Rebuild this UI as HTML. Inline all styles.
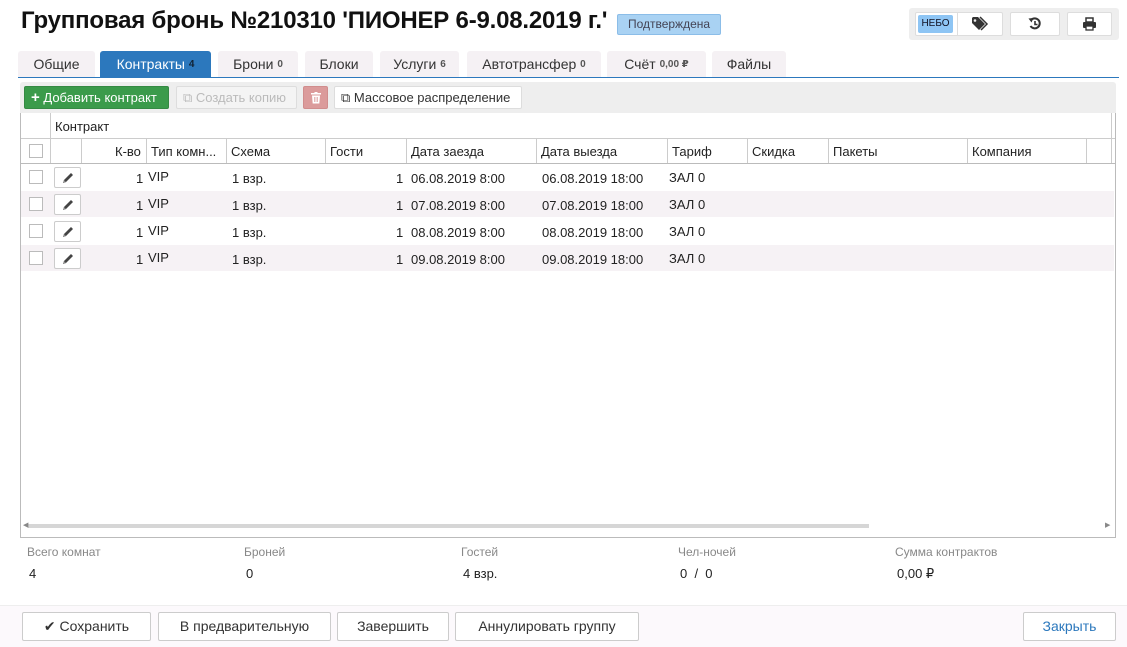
<!DOCTYPE html><html><head><meta charset="utf-8"><style>
*{box-sizing:border-box}body{margin:0;width:1127px;height:647px;background:#fff;font-family:"Liberation Sans","DejaVu Sans",sans-serif;font-size:13px;color:#222;position:relative;overflow:hidden}
.a{position:absolute;white-space:nowrap}
.tab{position:absolute;top:51px;height:26px;background:#f5f1f4;border-radius:3px 3px 0 0;text-align:center;line-height:26px;font-size:14px;color:#333}
.tab sup{font-size:10px;color:#555;font-weight:bold;vertical-align:2px}
.btn{position:absolute;top:86px;height:23px;border:1px solid #ddd;background:#fff;border-radius:2px;line-height:21px;font-size:13px;padding-left:6px;color:#333}
.vl{position:absolute;width:1px;background:#ccc}
.row{position:absolute;left:21px;width:1093px;height:26px}
.cb{position:absolute;width:14px;height:14px;border:1px solid #bbb;background:#fff}
.ed{position:absolute;left:54px;width:27px;height:21px;border:1px solid #ccc;border-radius:2px;background:#fff}
.fb{position:absolute;top:612px;height:29px;border:1px solid #ccc;border-radius:2px;background:#fff;text-align:center;line-height:27px;font-size:14px;color:#333}
.lbl{position:absolute;top:545px;font-size:12px;color:#888}
.val{position:absolute;top:566px;font-size:13px;color:#222}
</style></head><body>
<svg width="0" height="0" style="position:absolute"><defs><g id="pen"><path d="M2 12l1-3 7-7 2 2-7 7z" fill="#444"/><path d="M2 12l1-3 2 2z" fill="#888"/></g></defs></svg>
<div class="a" style="left:21px;top:7px;font-size:24px;font-weight:bold;color:#111;letter-spacing:-0.2px">Групповая бронь №210310 'ПИОНЕР 6-9.08.2019 г.'</div>
<div class="a" style="left:617px;top:14px;width:104px;height:21px;background:#a9d2f3;border:1px solid #8bbde8;border-radius:2px;font-size:12px;color:#445;line-height:19px;text-align:center">Подтверждена</div>
<div class="a" style="left:909px;top:8px;width:210px;height:32px;background:#eee;border-radius:3px"></div>
<div class="a" style="left:915px;top:12px;width:88px;height:24px;background:#fff;border:1px solid #ddd;border-radius:2px"></div>
<div class="a" style="left:918px;top:15px;width:35px;height:18px;background:#8ec5f4;border-radius:2px;font-size:10px;line-height:18px;text-align:center;color:#112">НЕБО</div>
<div class="vl" style="left:957px;top:13px;height:22px;background:#ddd"></div>
<svg class="a" style="left:971px;top:16px" width="18" height="16" viewBox="0 0 18 16"><path d="M1 2v5l7 7 6-6-7-7H2z" fill="#333"/><path d="M9 1l7 7-6 6" fill="none" stroke="#333" stroke-width="1.5"/><circle cx="4" cy="4.5" r="1.3" fill="#eee"/></svg>
<div class="a" style="left:1010px;top:12px;width:50px;height:24px;background:#fff;border:1px solid #ddd;border-radius:2px"></div>
<svg class="a" style="left:1028px;top:17px" width="14" height="14" viewBox="0 0 14 14"><path d="M3 3A5 5 0 1 1 2.5 9" fill="none" stroke="#333" stroke-width="2"/><path d="M0.5 1.5L3.5 5.5 5.5 1z" fill="#333"/><path d="M7 4v3.5h2.5" fill="none" stroke="#333" stroke-width="1.6"/></svg>
<div class="a" style="left:1067px;top:12px;width:45px;height:24px;background:#fff;border:1px solid #ddd;border-radius:2px"></div>
<svg class="a" style="left:1082px;top:17px" width="15" height="14" viewBox="0 0 15 14"><rect x="4" y="1" width="7" height="4" fill="none" stroke="#333" stroke-width="1.5"/><rect x="1" y="5" width="13" height="6" rx="1" fill="#333"/><rect x="4" y="9" width="7" height="4" fill="#fff" stroke="#333" stroke-width="1.3"/></svg>

<div class="tab" style="left:18px;width:77px">Общие</div>
<div class="tab" style="left:100px;width:111px;background:#2c78bd;color:#fff">Контракты <sup style="color:#123">4</sup></div>
<div class="tab" style="left:218px;width:80px">Брони <sup>0</sup></div>
<div class="tab" style="left:305px;width:68px">Блоки</div>
<div class="tab" style="left:380px;width:79px">Услуги <sup>6</sup></div>
<div class="tab" style="left:467px;width:134px">Автотрансфер <sup>0</sup></div>
<div class="tab" style="left:607px;width:99px">Счёт <sup>0,00 ₽</sup></div>
<div class="tab" style="left:712px;width:74px">Файлы</div>
<div class="a" style="left:18px;top:77px;width:1101px;height:1px;background:#2c78bd"></div>

<div class="a" style="left:20px;top:82px;width:1096px;height:31px;background:#eee;border-radius:3px 3px 0 0"></div>
<div class="btn" style="left:24px;width:145px;background:#3b9b4b;border-color:#358a44;color:#fff"><b style="font-size:15px">+</b> Добавить контракт</div>
<div class="btn" style="left:176px;width:121px;background:#f4f4f4;color:#bbb">⧉ Создать копию</div>
<div class="btn" style="left:303px;width:25px;background:#db9b9b;border-color:#d08d8d;padding:0">
<svg style="position:absolute;left:7px;top:5px" width="10" height="12" viewBox="0 0 10 12"><rect x="0" y="1" width="10" height="1.5" fill="#fff"/><rect x="3.5" y="0" width="3" height="1.5" fill="#fff"/><path d="M1 3.5h8l-.7 8h-6.6z" fill="#fff"/><path d="M3.5 5v5M5 5v5M6.5 5v5" stroke="#db9b9b" stroke-width=".7"/></svg></div>
<div class="btn" style="left:334px;width:188px">⧉ Массовое распределение</div>

<div class="a" style="left:20px;top:113px;width:1096px;height:425px;border:1px solid #bbb;border-top:none"></div>
<div class="a" style="left:21px;top:138px;width:1094px;height:1px;background:#ccc"></div>
<div class="a" style="left:21px;top:163px;width:1094px;height:1px;background:#bbb"></div>
<div class="vl" style="left:50px;top:113px;height:50px"></div>
<div class="vl" style="left:1111px;top:113px;height:50px"></div>
<div class="vl" style="left:81px;top:138px;height:25px"></div>
<div class="vl" style="left:146px;top:138px;height:25px"></div>
<div class="vl" style="left:226px;top:138px;height:25px"></div>
<div class="vl" style="left:325px;top:138px;height:25px"></div>
<div class="vl" style="left:406px;top:138px;height:25px"></div>
<div class="vl" style="left:536px;top:138px;height:25px"></div>
<div class="vl" style="left:667px;top:138px;height:25px"></div>
<div class="vl" style="left:747px;top:138px;height:25px"></div>
<div class="vl" style="left:828px;top:138px;height:25px"></div>
<div class="vl" style="left:967px;top:138px;height:25px"></div>
<div class="vl" style="left:1086px;top:138px;height:25px"></div>
<div class="a" style="left:55px;top:119px;font-size:13px">Контракт</div>
<div class="cb" style="left:29px;top:144px"></div>
<div class="a" style="left:115px;top:144px">К-во</div>
<div class="a" style="left:151px;top:144px">Тип комн...</div>
<div class="a" style="left:231px;top:144px">Схема</div>
<div class="a" style="left:330px;top:144px">Гости</div>
<div class="a" style="left:411px;top:144px">Дата заезда</div>
<div class="a" style="left:541px;top:144px">Дата выезда</div>
<div class="a" style="left:672px;top:144px">Тариф</div>
<div class="a" style="left:752px;top:144px">Скидка</div>
<div class="a" style="left:833px;top:144px">Пакеты</div>
<div class="a" style="left:972px;top:144px">Компания</div>

<div class="row" style="top:164px"></div>
<div class="row" style="top:191px;background:#f6f2f5"></div>
<div class="row" style="top:218px"></div>
<div class="row" style="top:245px;background:#f6f2f5"></div>

<div class="cb" style="left:29px;top:170px"></div><div class="ed" style="top:167px"></div><svg class="a" style="left:61px;top:171px" width="14" height="14"><use href="#pen"/></svg>
<div class="a" style="left:136px;top:171px">1</div><div class="a" style="left:148px;top:169px">VIP</div><div class="a" style="left:232px;top:171px">1 взр.</div><div class="a" style="left:396px;top:171px">1</div><div class="a" style="left:411px;top:171px">06.08.2019 8:00</div><div class="a" style="left:542px;top:171px">06.08.2019 18:00</div><div class="a" style="left:669px;top:170px">ЗАЛ 0</div>
<div class="cb" style="left:29px;top:197px"></div><div class="ed" style="top:194px"></div><svg class="a" style="left:61px;top:198px" width="14" height="14"><use href="#pen"/></svg>
<div class="a" style="left:136px;top:198px">1</div><div class="a" style="left:148px;top:196px">VIP</div><div class="a" style="left:232px;top:198px">1 взр.</div><div class="a" style="left:396px;top:198px">1</div><div class="a" style="left:411px;top:198px">07.08.2019 8:00</div><div class="a" style="left:542px;top:198px">07.08.2019 18:00</div><div class="a" style="left:669px;top:197px">ЗАЛ 0</div>
<div class="cb" style="left:29px;top:224px"></div><div class="ed" style="top:221px"></div><svg class="a" style="left:61px;top:225px" width="14" height="14"><use href="#pen"/></svg>
<div class="a" style="left:136px;top:225px">1</div><div class="a" style="left:148px;top:223px">VIP</div><div class="a" style="left:232px;top:225px">1 взр.</div><div class="a" style="left:396px;top:225px">1</div><div class="a" style="left:411px;top:225px">08.08.2019 8:00</div><div class="a" style="left:542px;top:225px">08.08.2019 18:00</div><div class="a" style="left:669px;top:224px">ЗАЛ 0</div>
<div class="cb" style="left:29px;top:251px"></div><div class="ed" style="top:248px"></div><svg class="a" style="left:61px;top:252px" width="14" height="14"><use href="#pen"/></svg>
<div class="a" style="left:136px;top:252px">1</div><div class="a" style="left:148px;top:250px">VIP</div><div class="a" style="left:232px;top:252px">1 взр.</div><div class="a" style="left:396px;top:252px">1</div><div class="a" style="left:411px;top:252px">09.08.2019 8:00</div><div class="a" style="left:542px;top:252px">09.08.2019 18:00</div><div class="a" style="left:669px;top:251px">ЗАЛ 0</div>

<div class="a" style="left:28px;top:524px;width:841px;height:4px;background:#d6d6d6"></div>
<div class="a" style="left:23px;top:521px;font-size:7px;color:#888">◀</div>
<div class="a" style="left:1105px;top:521px;font-size:7px;color:#888">▶</div>

<div class="lbl" style="left:27px">Всего комнат</div><div class="val" style="left:29px">4</div>
<div class="lbl" style="left:244px">Броней</div><div class="val" style="left:246px">0</div>
<div class="lbl" style="left:461px">Гостей</div><div class="val" style="left:463px">4 взр.</div>
<div class="lbl" style="left:678px">Чел-ночей</div><div class="val" style="left:680px">0 &nbsp;/ &nbsp;0</div>
<div class="lbl" style="left:895px">Сумма контрактов</div><div class="val" style="left:897px">0,00 ₽</div>

<div class="a" style="left:0;top:605px;width:1127px;height:42px;background:#fcf9fc;border-top:1px solid #eee"></div>
<div class="fb" style="left:22px;width:129px">✔ Сохранить</div>
<div class="fb" style="left:158px;width:173px">В предварительную</div>
<div class="fb" style="left:337px;width:112px">Завершить</div>
<div class="fb" style="left:455px;width:184px">Аннулировать группу</div>
<div class="fb" style="left:1023px;width:93px;color:#2c78bd">Закрыть</div>
</body></html>
